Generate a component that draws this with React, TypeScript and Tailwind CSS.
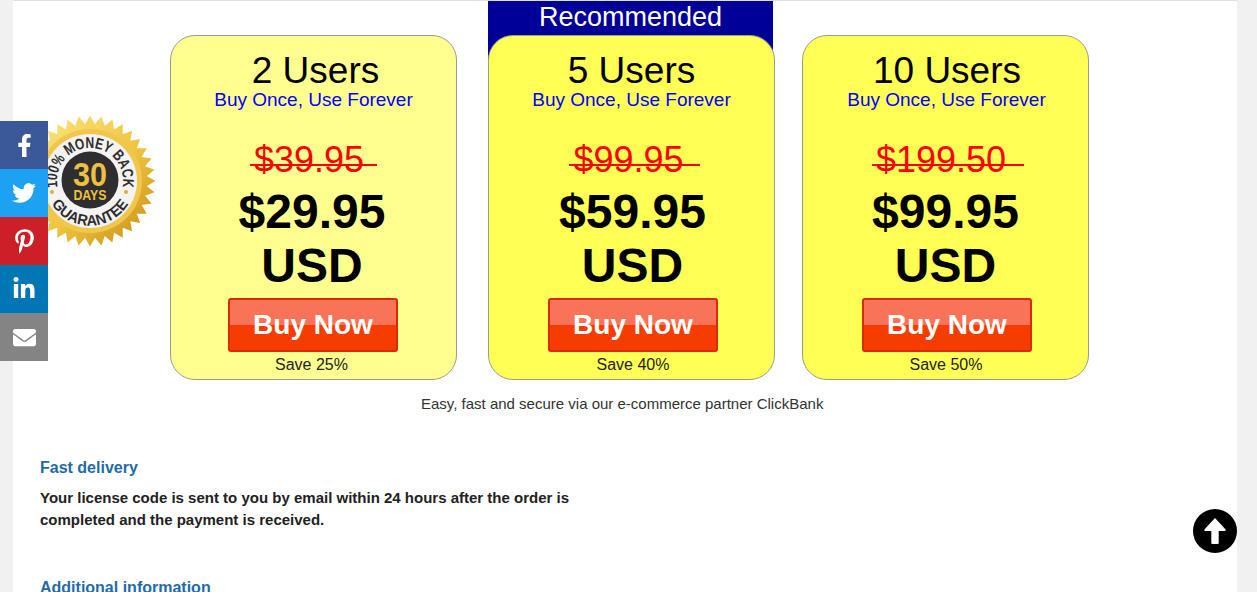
import { FaFacebookF, FaTwitter, FaPinterestP, FaLinkedinIn, FaEnvelope } from "react-icons/fa";

const sansFont = "font-['Liberation_Sans',Arial,sans-serif]";

function starPoints(count: number, outer: number, inner: number) {
  const pts: string[] = [];
  for (let i = 0; i < count * 2; i++) {
    const r = i % 2 === 0 ? outer : inner;
    const a = (Math.PI * i) / count;
    pts.push(`${(66 + r * Math.sin(a)).toFixed(2)},${(66 - r * Math.cos(a)).toFixed(2)}`);
  }
  return pts.join(" ");
}

function Seal() {
  return (
    <svg width="132" height="132" viewBox="0 0 132 132" className="block">
      <defs>
        <linearGradient id="gold" x1="0" y1="0" x2="1" y2="1">
          <stop offset="0" stopColor="#fde889" />
          <stop offset="0.55" stopColor="#f0c53f" />
          <stop offset="1" stopColor="#c48a10" />
        </linearGradient>
        <path id="topArc" d="M 33.5 71.6 A 33 33 0 1 1 98.5 71.6" />
        <path id="bottomArc" d="M 21 65.5 A 45 45 0 0 0 111 65.5" />
      </defs>
      <polygon points={starPoints(36, 65.5, 57)} fill="url(#gold)" />
      <circle cx="66" cy="66" r="52" fill="#f0c74c" />
      <circle cx="66" cy="66" r="47" fill="#f4f3f1" />
      <circle cx="66" cy="65" r="28.5" fill="#2e2d2f" />
      <circle cx="28" cy="77" r="2" fill="#e2b02f" />
      <circle cx="102" cy="77" r="2" fill="#e2b02f" />
      <g fontFamily="'Liberation Sans', Arial, sans-serif" fontWeight="700" fill="#2e2d2f">
        <text fontSize="15.5">
          <textPath href="#topArc" startOffset="50%" textAnchor="middle" textLength="116" lengthAdjust="spacingAndGlyphs">100% MONEY BACK</textPath>
        </text>
        <text fontSize="15">
          <textPath href="#bottomArc" startOffset="50%" textAnchor="middle" textLength="92" lengthAdjust="spacingAndGlyphs">GUARANTEE</textPath>
        </text>
      </g>
      <g fontFamily="'Liberation Sans', Arial, sans-serif" fontWeight="700" fill="#ecc040" textAnchor="middle">
        <text x="66" y="71" fontSize="33" textLength="34" lengthAdjust="spacingAndGlyphs">30</text>
        <text x="66" y="84.5" fontSize="15" textLength="33" lengthAdjust="spacingAndGlyphs">DAYS</text>
      </g>
    </svg>
  );
}

type Nudge = { users: string; sub: string; was: string; price: string; buy: string; save: string };

function PlanCard({ users, was, now, save, bg, nudge, className }: { users: string; was: string; now: string; save: string; bg: string; nudge: Nudge; className?: string }) {
  return (
    <div className={`flex h-[345px] w-[287px] shrink-0 flex-col items-center rounded-[25px] border-[1.5px] border-[#9c9c90] ${bg} ${className ?? ""}`}>
      <div className={`mt-[15px] text-[37px] leading-[40px] text-black ${nudge.users}`}>{users}</div>
      <div className={`mt-[-1px] text-[19px] leading-[20px] text-[#0000ff] ${nudge.sub}`}>Buy Once, Use Forever</div>
      <div className={`relative mt-[30px] text-[36px] leading-[40px] text-[#ff0000] ${nudge.was}`}>
        {was}
        <div className="absolute inset-x-0 top-[24px] h-[1.5px] bg-[#ff0000]" />
      </div>
      <div className={`mt-[5px] w-full text-center text-[48px] font-bold leading-[54px] text-black ${nudge.price}`}>
        {now}
        <br />
        USD
      </div>
      <div className={`mt-[5px] flex h-[54px] w-[170px] items-center justify-center rounded-[3px] border-2 border-[#d92a00] bg-[linear-gradient(#f87358_0%,#f87358_50%,#f63c00_50%,#f63c00_100%)] text-[28px] font-bold text-white ${nudge.buy}`}>
        Buy Now
      </div>
      <div className={`mt-[3px] text-[16px] leading-[20px] text-[#222] ${nudge.save}`}>{save}</div>
    </div>
  );
}

const social = [
  { bg: "bg-[#3b5998]", icon: <FaFacebookF size={23} /> },
  { bg: "bg-[#1da1f2]", icon: <FaTwitter size={24} /> },
  { bg: "bg-[#cb2027]", icon: <FaPinterestP size={25} /> },
  { bg: "bg-[#0077b5]", icon: <FaLinkedinIn size={24} /> },
  { bg: "bg-[#848484]", icon: <FaEnvelope size={23} /> },
];

export default function App() {
  return (
    <div className={`relative h-[592px] w-[1257px] overflow-hidden bg-[#f1f1f1] ${sansFont}`}>
      <div className="mx-[13px] h-[592px] w-[1224px] overflow-hidden border-t border-[#e0e0e0] bg-white">
        <div className="ml-[157px] flex items-start pt-[34px]">
          <PlanCard
            users="2 Users"
            was="$39.95"
            now="$29.95"
            save="Save 25%"
            bg="bg-[#ffff8f]"
            nudge={{ users: "ml-[4px]", sub: "", was: "pl-[4px] pr-[13px]", price: "pr-[3px]", buy: "mr-[1px]", save: "mr-[4px]" }}
          />
          <div className="relative ml-[31px] shrink-0">
            <div className="absolute left-0 top-[-34px] flex h-[60px] w-[285px] justify-center bg-[#000099] text-[27px] leading-[32px] text-white">
              Recommended
            </div>
            <div className="relative">
              <PlanCard
                users="5 Users"
                was="$99.95"
                now="$59.95"
                save="Save 40%"
                bg="bg-[#ffff55]"
                nudge={{ users: "", sub: "", was: "ml-[6px] pl-[4px] pr-[16px]", price: "pl-[2px]", buy: "ml-[3px]", save: "ml-[3px]" }}
              />
            </div>
          </div>
          <PlanCard
            users="10 Users"
            was="$199.50"
            now="$99.95"
            save="Save 50%"
            bg="bg-[#ffff55]"
            className="ml-[27px]"
            nudge={{ users: "ml-[3px]", sub: "ml-[2px]", was: "ml-[5px] pl-[4px] pr-[18px]", price: "", buy: "ml-[3px]", save: "ml-[1px]" }}
          />
        </div>
        <p className="ml-[408px] mt-[14px] text-[15px] leading-[20px] text-[#333]">
          Easy, fast and secure via our e-commerce partner ClickBank
        </p>
        <div className="ml-[27px] mt-[44px] w-[560px]">
          <h3 className="text-[16px] font-bold leading-[20px] text-[#1f6aa8]">Fast delivery</h3>
          <p className="mt-[9px] text-[15px] font-bold leading-[22px] text-[#222]">
            Your license code is sent to you by email within 24 hours after the order is completed and the payment is received.
          </p>
          <h3 className="mt-[47px] text-[16px] font-bold leading-[20px] text-[#1f6aa8]">Additional information</h3>
        </div>
      </div>

      <div className="absolute left-[24px] top-[115px]">
        <Seal />
      </div>

      <div className="absolute left-0 top-[121px] flex w-[48px] flex-col">
        {social.map((s, i) => (
          <div key={i} className={`flex h-[48px] items-center justify-center text-white ${s.bg}`}>
            {s.icon}
          </div>
        ))}
      </div>

      <div className="absolute left-[1193px] top-[509px] flex h-[44px] w-[44px] items-center justify-center rounded-full bg-black">
        <svg width="28" height="28" viewBox="0 0 28 28" fill="white">
          <path d="M14 1 L24.6 12.4 Q25.2 14 23.5 14 L17.7 14 L17.7 26 Q17.7 27 16.7 27 L11.3 27 Q10.3 27 10.3 26 L10.3 14 L4.5 14 Q2.8 14 3.4 12.4 Z" />
        </svg>
      </div>
    </div>
  );
}
